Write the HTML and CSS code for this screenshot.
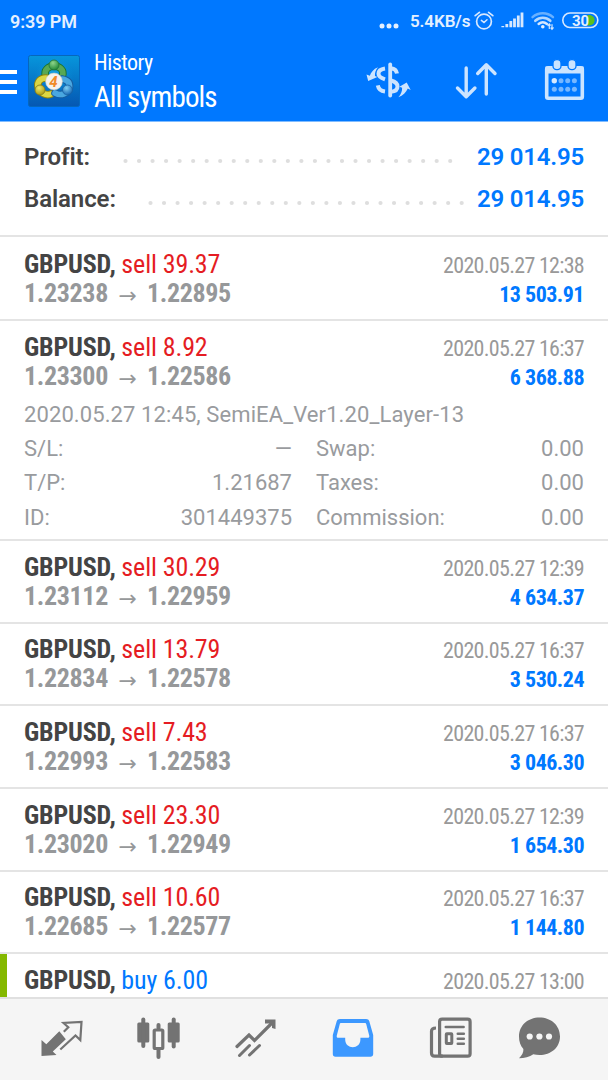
FILE: index.html
```
<!DOCTYPE html>
<html lang="en">
<head>
<meta charset="utf-8">
<title>History</title>
<link rel="stylesheet" href="styles.css">
</head>
<body>
<div class="app">
  <header class="top">
    <div class="status">
      <span class="clock">9:39 PM</span>
      <svg class="status-dots" width="20" height="6" viewBox="0 0 20 6" fill="#e4f0ff"><circle cx="3" cy="3" r="2.5"/><circle cx="10" cy="3" r="2.5"/><circle cx="17" cy="3" r="2.5"/></svg>
      <span class="speed">5.4KB/s</span>
      <svg class="status-icons" width="132" height="22" viewBox="470 10 132 22" fill="none" stroke="#d6e8ff" stroke-linecap="round">
        <circle cx="484" cy="21.5" r="7.4" stroke-width="1.7"/>
        <path d="M475.2 15.6l4.2-3.2M492.8 15.6l-4.2-3.2" stroke-width="1.8"/>
        <path d="M481.4 20.4l2.6 2.2 3-2.8" stroke-width="1.5"/>
        <path d="M502.800 26v1.200M506.800 24v3.200M510.800 21v6.200M514.500 18.500v8.700M518.300 15.500v11.700M522 12.500v14.700" stroke-width="2.800" stroke-linecap="butt"/>
        <path d="M532.500 17.200c6-5.200 14.500-5.200 20.500 0" stroke="#68b0ff" stroke-width="2.400"/>
        <path d="M535.300 20.800c4.500-4 10.500-4 15 0" stroke-width="2.600" stroke="#b5d8ff"/>
        <path d="M538.600 24c2.600-2.300 5.800-2.300 8.400 0" stroke-width="2.400"/>
        <circle cx="542.800" cy="26.800" r="1.800" fill="#e4f0ff" stroke="none"/>
        <path d="M549.300 28.500v-4.500M552 24.500v4.500M548 25.500l1.300-1.500 1 1.200M553.200 27.800l-1.200 1.400-1-1.200" stroke-width="1.200"/>
        <path d="M587.500 15h1.500c3.400 0 5.600 2.400 5.600 5.200s-2.200 5.200-5.600 5.200h-1.500z" fill="#5ac01e" stroke="none"/>
        <rect x="562.800" y="13" width="35" height="14.500" rx="7.200" stroke-width="1.600"/>
        <text x="572" y="25.500" class="battery">30</text>
      </svg>
    </div>
    <div class="toolbar">
      <div class="menu"><i></i><i></i><i></i></div>
      <svg class="logo" width="54" height="54" viewBox="27 54 54 54">
        <defs>
          <linearGradient id="bg" x1="0" y1="0" x2="0" y2="1"><stop offset="0" stop-color="#0796dc"/><stop offset="1" stop-color="#0557b2"/></linearGradient>
          <radialGradient id="glow"><stop offset="0" stop-color="#22bdf2"/><stop offset="1" stop-color="#0790d8" stop-opacity="0"/></radialGradient>
          <radialGradient id="green" cx=".4" cy=".3" r=".7"><stop offset="0" stop-color="#8fd48a"/><stop offset="1" stop-color="#238a36"/></radialGradient>
          <radialGradient id="yellow" cx=".4" cy=".3" r=".7"><stop offset="0" stop-color="#f0e96a"/><stop offset="1" stop-color="#aa9c13"/></radialGradient>
          <radialGradient id="blue" cx=".4" cy=".3" r=".7"><stop offset="0" stop-color="#80d0f5"/><stop offset="1" stop-color="#1667b4"/></radialGradient>
        </defs>
        <rect x="28.500" y="55.500" width="51" height="51" rx="2" fill="url(#bg)" stroke="#0567bd"/>
        <circle cx="54" cy="76" r="20" fill="url(#glow)" opacity=".7"/>
        <g fill="none" stroke-linecap="round">
          <path d="M45.500 76c-2-6 3-10 8.500-10s10.500 4 8.500 10" stroke="#1b7430" stroke-width="7.500"/>
          <path d="M45.500 76c-2-6 3-10 8.500-10s10.500 4 8.500 10" stroke="#58a854" stroke-width="5.600"/>
          <path d="M46 78c-6 0-9 4-8 9 2 6 8 9 13 7" stroke="#91830e" stroke-width="7.500"/>
          <path d="M46 78c-6 0-9 4-8 9 2 6 8 9 13 7" stroke="#dbd643" stroke-width="5.600"/>
          <path d="M62 79c6 1 8 4 7.500 8.500-2 6-8 9-14.500 5.500" stroke="#175c9e" stroke-width="7.500"/>
          <path d="M62 79c6 1 8 4 7.500 8.500-2 6-8 9-14.500 5.500" stroke="#49a7e0" stroke-width="5.600"/>
        </g>
        <circle cx="54" cy="65" r="5" fill="url(#green)" stroke="#21733b" stroke-width=".8"/>
        <circle cx="40" cy="90" r="5" fill="url(#yellow)" stroke="#857a19" stroke-width=".8"/>
        <circle cx="67.500" cy="90" r="5" fill="url(#blue)" stroke="#1761a3" stroke-width=".8"/>
        <circle cx="54" cy="81.500" r="8.400" fill="#f5f2ee" stroke="#c4c8be" stroke-width=".6"/>
        <text x="49.200" y="87" class="four">4</text>
      </svg>
      <div class="heading"><div class="h-small cond">History</div><div class="h-big cond">All symbols</div></div>
      <svg class="actions" width="230" height="48" viewBox="360 56 230 48" fill="none" stroke="#cce4ff">
        <g stroke="none" fill="#cce4ff">
          <path d="M366.500 74.500l3.300 1.300c1.200-3.600 3.600-6.800 8.200-8.600-2.600 3.300-3.300 5.800-3 8.800l2.400 1-9.200 4z"/>
          <path d="M410.700 90l-2.900-1.400c-1.800 3.900-4.800 7-9.400 8.700 2.700-3.300 3.900-6.200 3.700-9.600l-2.700-1 7.300-4.300z"/>
        </g>
        <path d="M390.200 64.500v31" stroke-width="3.800" stroke-linecap="round"/>
        <path d="M385 68.500c-4.300.6-6.500 2.700-6.500 5.200s2.200 4.200 6.500 5.600M385 91.500c-4-.5-6.500-2.500-7.200-6.200M391 68.300c3.500.4 5.400 2 6 5.200M391 80.500c4.500 1.200 6.500 3.200 6.500 6 0 3-2.300 5-6.500 5.300" stroke-width="4"/>
        <path d="M466.200 68v28M457.500 88l8.700 8.700 8.700-8.700M486.300 94v-28M477.700 73.500l8.600-8.700 8.700 8.700" stroke-width="3.400" stroke-linecap="round" stroke-linejoin="round"/>
        <rect x="546.700" y="67.700" width="35.600" height="30.600" rx="1.500" stroke-width="3.600"/>
        <path d="M545.500 66.500h38v7h-38z" fill="#cce4ff" stroke="none"/>
        <rect x="553" y="59.600" width="8" height="10" rx="3.700" fill="#cce4ff" stroke="#0078ff" stroke-width="1.300"/>
        <rect x="568" y="59.600" width="8" height="10" rx="3.700" fill="#cce4ff" stroke="#0078ff" stroke-width="1.300"/>
        <g fill="#77b7ff" stroke="none"><circle cx="554.300" cy="80.700" r="2.700" fill="#d6e9ff"/><circle cx="561" cy="80.700" r="2.500"/><circle cx="567.700" cy="80.700" r="2.500"/><circle cx="574.400" cy="80.700" r="2.500"/><circle cx="554.300" cy="89.200" r="2.500"/><circle cx="561" cy="89.200" r="2.500"/><circle cx="567.700" cy="89.200" r="2.500"/><circle cx="574.400" cy="89.200" r="2.500"/></g>
      </svg>
    </div>
  </header>
  <section class="summary">
    <div class="sum-row"><span>Profit:</span><svg class="leader leader-profit" height="6"><line x1="2.500" y1="3" x2="100%" y2="3"/></svg><b>29 014.95</b></div>
    <div class="sum-row"><span>Balance:</span><svg class="leader leader-balance" height="6"><line x1="2.500" y1="3" x2="100%" y2="3"/></svg><b>29 014.95</b></div>
  </section>
  <main class="deals" id="deals">
    <article class="deal first"><div class="line cond"><span><b>GBPUSD,</b> <em class="sell">sell 39.37</em></span><time>2020.05.27 12:38</time></div><div class="line prices cond"><span>1.23238<i class="arrow">→</i>1.22895</span><strong>13 503.91</strong></div></article>
    <article class="deal open"><div class="line cond"><span><b>GBPUSD,</b> <em class="sell">sell 8.92</em></span><time>2020.05.27 16:37</time></div><div class="line prices cond"><span>1.23300<i class="arrow">→</i>1.22586</span><strong>6 368.88</strong></div>
      <div class="details"><p>2020.05.27 12:45, SemiEA_Ver1.20_Layer-13</p>
        <dl><dt>S/L:</dt><dd class="dash">—</dd><dt>Swap:</dt><dd>0.00</dd><dt>T/P:</dt><dd>1.21687</dd><dt>Taxes:</dt><dd>0.00</dd><dt>ID:</dt><dd>301449375</dd><dt>Commission:</dt><dd>0.00</dd></dl></div>
    </article>
    <article class="deal"><div class="line cond"><span><b>GBPUSD,</b> <em class="sell">sell 30.29</em></span><time>2020.05.27 12:39</time></div><div class="line prices cond"><span>1.23112<i class="arrow">→</i>1.22959</span><strong>4 634.37</strong></div></article>
    <article class="deal"><div class="line cond"><span><b>GBPUSD,</b> <em class="sell">sell 13.79</em></span><time>2020.05.27 16:37</time></div><div class="line prices cond"><span>1.22834<i class="arrow">→</i>1.22578</span><strong>3 530.24</strong></div></article>
    <article class="deal"><div class="line cond"><span><b>GBPUSD,</b> <em class="sell">sell 7.43</em></span><time>2020.05.27 16:37</time></div><div class="line prices cond"><span>1.22993<i class="arrow">→</i>1.22583</span><strong>3 046.30</strong></div></article>
    <article class="deal"><div class="line cond"><span><b>GBPUSD,</b> <em class="sell">sell 23.30</em></span><time>2020.05.27 12:39</time></div><div class="line prices cond"><span>1.23020<i class="arrow">→</i>1.22949</span><strong>1 654.30</strong></div></article>
    <article class="deal"><div class="line cond"><span><b>GBPUSD,</b> <em class="sell">sell 10.60</em></span><time>2020.05.27 16:37</time></div><div class="line prices cond"><span>1.22685<i class="arrow">→</i>1.22577</span><strong>1 144.80</strong></div></article>
    <article class="deal profit-mark"><div class="line cond"><span><b>GBPUSD,</b> <em class="buy">buy 6.00</em></span><time>2020.05.27 13:00</time></div></article>
  </main>
  <nav class="tabs">
    <svg width="608" height="82" viewBox="0 999 608 82" fill="none" stroke="#737373">
      <path d="M41.500 1040l4.800 4.200 13-13 6.500 8-13 12.300 3.700 3.600-15 1z" fill="#737373" stroke="none"/>
      <path d="M60.300 1049.500l15.200-14 4.800 4.500 1.200-18-18 1 4.800 4.300-4.500 4.500" stroke-width="2.200"/>
      <g stroke="none" fill="#737373"><rect x="137.300" y="1022.500" width="12" height="20" rx="1.500"/><rect x="141.300" y="1017.500" width="4" height="30.500" rx="2"/><rect x="167.700" y="1022.500" width="12" height="20" rx="1.500"/><rect x="171.700" y="1017.500" width="4" height="31" rx="2"/><rect x="156.500" y="1023" width="4" height="7" rx="2"/><rect x="156.500" y="1048" width="4" height="11" rx="2"/></g>
      <rect x="154.200" y="1030" width="8.600" height="18.500" rx="1" stroke-width="3.200"/>
      <path d="M237 1046.500l12-11.500 5.500 5.500 18.500-18.500" stroke-width="3.200" stroke-linecap="round"/>
      <path d="M265 1019.500h10.500v9.500l-3.500-1v-3.500l-3-1h-4z" fill="#737373" stroke="none"/>
      <path d="M239.500 1055.500l10-10M249.500 1055l10-9.500" stroke-width="3" stroke-linecap="round"/>
      <path fill-rule="evenodd" fill="#3c98ff" stroke="none" d="M340 1019h26c1.800 0 2.800.8 3.300 2.300l3.900 13.700v19c0 1.700-1.200 2.700-2.700 2.700h-35c-1.700 0-2.700-1-2.700-2.700v-19l3.900-13.700c.5-1.500 1.600-2.300 3.300-2.300zM341.200 1023c-.8 0-1.200.4-1.400 1l-3 11.500c-.4 1.500.2 2.300 1.600 2.300h6.800v1.700c0 10.200 15.200 10.200 15.200 0v-1.700h7.200c1.400 0 2-.8 1.600-2.300l-3-11.500c-.2-.6-.6-1-1.400-1z"/>
      <g stroke-width="3.200"><rect x="439.600" y="1019.200" width="30.500" height="37" rx="2.500"/><path d="M436 1028c-3 0-4.500 1-4.500 3.500V1053c0 2.200 1 3.200 3.200 3.200h8" /><path d="M445.800 1027h17.800M457.800 1033.800h6M457.800 1038.800h6M457.800 1043.800h6" stroke-width="2.600" stroke-linecap="round"/><rect x="446.300" y="1033.800" width="5.500" height="9.800" rx=".5" stroke-width="3"/></g>
      <path d="M539.500 1017.500c11.400 0 20.500 7.800 20.500 19s-9.100 18.500-20.500 18.500c-2.200 0-4.200-.2-6.200-.8-3.600 2.600-9 4-14.300 4 3-3 4.700-6 4.400-9.200-2.900-3.300-4.400-7.200-4.400-12.500 0-11.200 9.100-19 20.500-19z" fill="#737373" stroke="none"/>
      <g fill="#f5f5f5" stroke="none"><circle cx="529.700" cy="1036.500" r="3.100"/><circle cx="539.400" cy="1036.500" r="3.100"/><circle cx="549" cy="1036.500" r="3.100"/></g>
    </svg>
  </nav>
</div>
</body>
</html>
```
FILE: styles.css
```
* { box-sizing: border-box; }
body { margin: 0; font-family: Roboto, sans-serif; background: #fff; }
.app { width: 608px; height: 1080px; display: flex; flex-direction: column; overflow: hidden; }
.cond { font-family: "Roboto Condensed", Roboto, sans-serif; font-stretch: 75%; }
.top { height: 122px; flex: none; background: #0078ff; border-bottom: 1px solid #80bcff; color: #fff; }
.status { height: 42px; display: flex; align-items: center; padding-left: 10px; font-weight: 600; font-size: 18px; color: #e4f0ff; }
.clock { width: 369px; letter-spacing: -.1px; }
.status-dots { margin-top: 9px; }
.speed { margin-left: 11px; font-size: 17px; width: 60px; letter-spacing: -.1px; }
.battery { font: 700 15px Roboto, sans-serif; fill: #e4f0ff; stroke: none; }
.toolbar { height: 79px; display: flex; }
.menu { width: 17px; margin: 28px 10px 0 0; display: flex; flex-direction: column; gap: 6px; }
.menu i { height: 4px; background: #fff; }
.logo { margin-top: 12px; }
.four { font: italic 700 15px Roboto, sans-serif; fill: #f08a28; }
.heading { margin: 8px 1px 0 13px; width: 265px; white-space: nowrap; }
.h-small { font-size: 22px; line-height: 26px; letter-spacing: -.5px; }
.h-big { font-size: 29px; line-height: 42px; letter-spacing: -.9px; }
.actions { margin-top: 14px; }
.summary { height: 113px; flex: none; padding-top: 14px; }
.sum-row { height: 42px; padding: 0 24px; display: flex; align-items: center; font-size: 24px; font-weight: 600; color: #444; letter-spacing: -.1px; }
.sum-row b { margin-left: auto; color: #0078ff; font-weight: 600; letter-spacing: -.2px; }
.leader { stroke: #dedede; stroke-width: 4.200; stroke-linecap: round; stroke-dasharray: 0 13.530; margin-top: 8px; }
.leader-profit { width: 335px; margin-left: 33px; }
.leader-balance { width: 321px; margin-left: 32px; }
.deals { flex: 1; min-height: 0; overflow: hidden; }
.deal { height: 82.700px; border-top: 2px solid #e4e4e4; padding: 9.600px 24px 0; }
.deal.first { height: 84px; padding-top: 11px; }
.deal.open { height: 220px; }
.profit-mark { position: relative; }
.profit-mark::before { content: ""; position: absolute; left: 0; top: 0; width: 7px; height: 100%; background: #84b800; }
.line { height: 32px; display: flex; justify-content: space-between; align-items: baseline; font-size: 26px; line-height: 32px; color: #444; white-space: nowrap; letter-spacing: -.2px; }
.line b { font-weight: 700; }
.line em { font-style: normal; letter-spacing: -.12px; }
.sell { color: #e51c23; }
.buy { color: #0078ff; }
.line time { font-size: 22px; color: #999; letter-spacing: -.7px; }
.prices { height: 29px; line-height: 26px; font-weight: 700; color: #96989a; letter-spacing: -.35px; }
.prices strong { font-size: 22px; font-weight: 700; color: #0078ff; letter-spacing: -.5px; }
.arrow { display: inline-block; width: 39px; text-align: center; font: 400 22px/22px "DejaVu Sans", sans-serif; vertical-align: -1px; }
.details { color: #999b9e; font-size: 22px; }
.details p { margin: 0; line-height: 34px; padding-top: 6.400px; letter-spacing: .1px; }
.details dl { margin: 0; display: grid; grid-template-columns: 100px 168px 168px 124px; column-gap: 0; line-height: 34.400px; }
.details dt:nth-of-type(even) { padding-left: 24px; }
.details dd { margin: 0; text-align: right; }
.tabs { height: 83px; flex: none; border-top: 2px solid #e0e0e0; background: #f5f5f5; }
.tabs svg { display: block; }
```
